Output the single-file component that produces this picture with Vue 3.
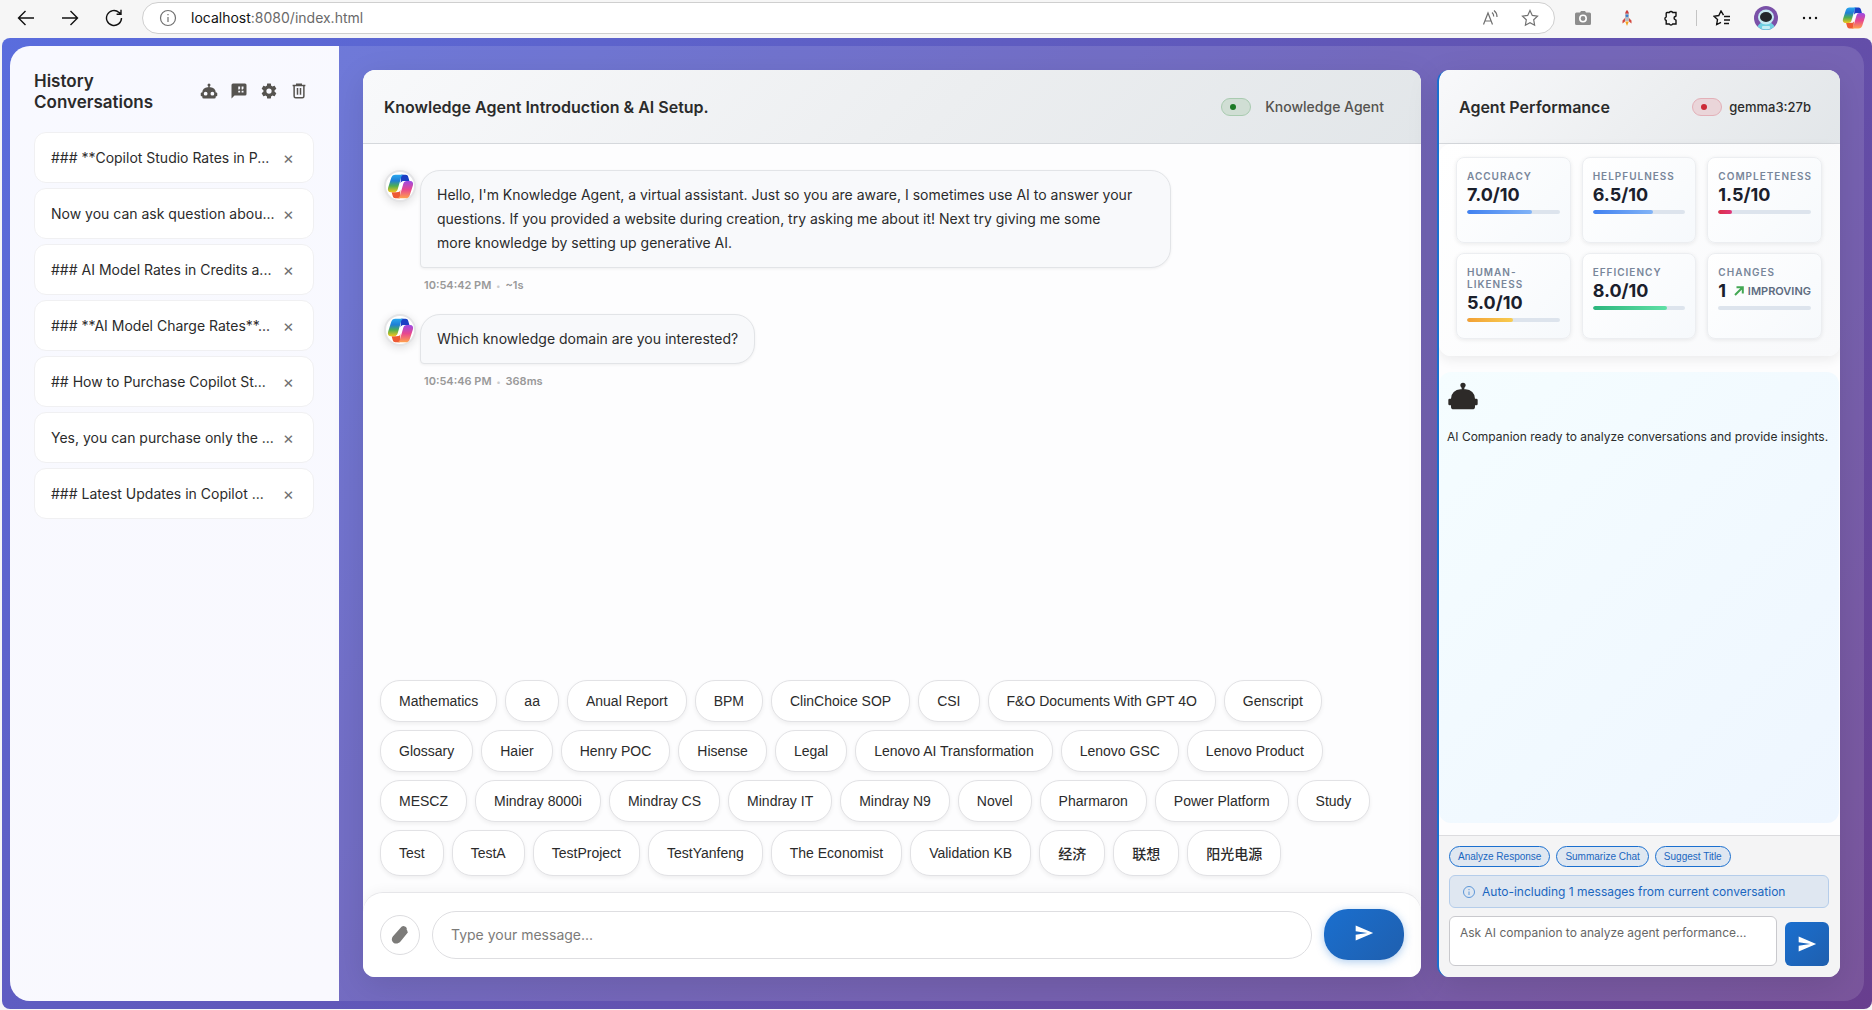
<script setup>
import { ref } from 'vue'

const message = ref('')
const question = ref('')

const robotBody =
  'M12 2a2 2 0 0 1 2 2c0 .74-.4 1.39-1 1.73V7h1a7 7 0 0 1 7 7h1a1 1 0 0 1 1 1v3a1 1 0 0 1-1 1h-1v1a2 2 0 0 1-2 2H5a2 2 0 0 1-2-2v-1H2a1 1 0 0 1-1-1v-3a1 1 0 0 1 1-1h1a7 7 0 0 1 7-7h1V5.73c-.6-.34-1-.99-1-1.73a2 2 0 0 1 2-2z'
const robotEyes =
  'M7.5 13a2.5 2.5 0 0 0-2.5 2.5A2.5 2.5 0 0 0 7.5 18a2.5 2.5 0 0 0 2.5-2.5A2.5 2.5 0 0 0 7.5 13m9 0a2.5 2.5 0 0 0-2.5 2.5 2.5 2.5 0 0 0 2.5 2.5 2.5 2.5 0 0 0 2.5-2.5 2.5 2.5 0 0 0-2.5-2.5z'
const gear =
  'M12 15.5A3.5 3.5 0 0 1 8.5 12 3.5 3.5 0 0 1 12 8.500a3.5 3.5 0 0 1 3.5 3.5 3.5 3.5 0 0 1-3.500 3.500m7.430-2.530c.04-.32.07-.64.07-.97s-.03-.66-.07-1l2.110-1.630c.19-.15.24-.42.12-.64l-2-3.460c-.12-.22-.39-.31-.61-.22l-2.490 1c-.52-.39-1.060-.73-1.690-.98l-.37-2.650A.506.506 0 0 0 14 2h-4c-.25 0-.46.18-.5.42l-.37 2.650c-.63.25-1.170.59-1.690.98l-2.490-1c-.22-.09-.49 0-.61.22l-2 3.460c-.13.22-.07.49.12.64L4.570 11c-.04.34-.07.67-.07 1s.03.65.07.97l-2.110 1.660c-.19.15-.25.42-.12.64l2 3.460c.12.22.39.3.61.22l2.490-1.010c.52.4 1.060.74 1.690.99l.37 2.650c.04.24.25.42.5.42h4c.25 0 .46-.18.5-.42l.37-2.650c.63-.26 1.170-.59 1.690-.99l2.490 1.010c.22.08.49 0 .61-.22l2-3.460c.12-.22.07-.49-.12-.64z'

const conversations = [
  '### **Copilot Studio Rates in P...',
  'Now you can ask question abou...',
  '### AI Model Rates in Credits a...',
  '### **AI Model Charge Rates**...',
  '## How to Purchase Copilot St...',
  'Yes, you can purchase only the ...',
  '### Latest Updates in Copilot ...'
]

const messages = [
  {
    text: "Hello, I'm Knowledge Agent, a virtual assistant. Just so you are aware, I sometimes use AI to answer your questions. If you provided a website during creation, try asking me about it! Next try giving me some more\u00a0knowledge by setting up generative AI.",
    time: '10:54:42 PM',
    took: '~1s'
  },
  { text: 'Which knowledge domain are you interested?', time: '10:54:46 PM', took: '368ms' }
]

const domains = [
  'Mathematics', 'aa', 'Anual Report', 'BPM', 'ClinChoice SOP', 'CSI', 'F&O Documents With GPT 4O', 'Genscript',
  'Glossary', 'Haier', 'Henry POC', 'Hisense', 'Legal', 'Lenovo AI Transformation', 'Lenovo GSC', 'Lenovo Product',
  'MESCZ', 'Mindray 8000i', 'Mindray CS', 'Mindray IT', 'Mindray N9', 'Novel', 'Pharmaron', 'Power Platform', 'Study',
  'Test', 'TestA', 'TestProject', 'TestYanfeng', 'The Economist', 'Validation KB', '经济', '联想', '阳光电源'
]

const metrics = [
  { label: 'Accuracy', value: '7.0/10', fill: 70, tone: 'blue' },
  { label: 'Helpfulness', value: '6.5/10', fill: 65, tone: 'blue' },
  { label: 'Completeness', value: '1.5/10', fill: 15, tone: 'red' },
  { label: 'Human-Likeness', value: '5.0/10', fill: 50, tone: 'amber' },
  { label: 'Efficiency', value: '8.0/10', fill: 80, tone: 'green' },
  { label: 'Changes', value: '1', fill: 0, tone: 'blue', trend: 'Improving' }
]

const quickActions = ['Analyze Response', 'Summarize Chat', 'Suggest Title']
</script>

<template>
  <div class="browser">
    <svg class="defs" width="0" height="0" aria-hidden="true">
      <defs>
        <linearGradient id="cpA" x1="0" y1="0" x2="0" y2="1">
          <stop offset="0" stop-color="#2aa7ee" /><stop offset=".35" stop-color="#1f7fd6" />
          <stop offset=".65" stop-color="#4fae52" /><stop offset="1" stop-color="#f4c51c" />
        </linearGradient>
        <linearGradient id="cpB" x1="0" y1="0" x2="0" y2="1">
          <stop offset="0" stop-color="#9a4be6" /><stop offset=".5" stop-color="#e8488e" />
          <stop offset="1" stop-color="#ffa24d" />
        </linearGradient>
        <symbol id="copilot" viewBox="0 0 24 24">
          <path d="M12.500 1.500h4c1.300 0 2 .8 2.400 2l1 3.500h-4.400c-2 0-3 .8-3.400 2.200z" fill="#1b3fc4" />
          <path d="M11.500 22.500h-4c-1.300 0-2-.8-2.400-2l-1-3.500h4.400c2 0 3-.8 3.400-2.200z" fill="#ee5a34" />
          <path d="M7.500 1.500h7.500c-1.300 0-2 .9-2.400 2.200L9.500 14.500c-.5 1.700-1.400 2.500-3 2.500h-3C1.300 17 .3 15.300 1 13L3.700 4.500c.6-2 1.800-3 3.800-3z" fill="url(#cpA)" />
          <path d="M16.500 22.500H9c1.300 0 2-.9 2.400-2.200L14.500 9.500c.5-1.700 1.400-2.500 3-2.500h3c2.200 0 3.200 1.700 2.500 4l-2.700 8.500c-.6 2-1.800 3-3.800 3z" fill="url(#cpB)" />
          <path d="M15.500 7.200c-2 .1-3 .8-3.500 2.300l-1.800 6c-.2.700-.5 1.100-.9 1.400 1.500-.2 2.300-.8 2.700-2.100l2.300-6c.3-.8.600-1.200 1.200-1.600z" fill="#fff" />
        </symbol>
        <symbol id="send" viewBox="0 0 24 24">
          <path d="M2 3v7l14 2-14 2v7l21-9z" fill="currentColor" />
        </symbol>
      </defs>
    </svg>

    <header class="toolbar">
      <nav class="nav" aria-label="Browser">
        <button aria-label="Back">
          <svg width="18" height="18" viewBox="0 0 18 18" class="line"><path d="M17 9H1.500M8.500 2l-7 7 7 7" /></svg>
        </button>
        <button aria-label="Forward">
          <svg width="18" height="18" viewBox="0 0 18 18" class="line"><path d="M1 9h15.500M9.500 2l7 7-7 7" /></svg>
        </button>
        <button aria-label="Reload">
          <svg width="18" height="18" viewBox="0 0 18 18" class="line"><path d="M16.500 9A7.500 7.500 0 1 1 14 3.400L16 5M16 .8V5.200h-4.400" /></svg>
        </button>
      </nav>
      <div class="address">
        <svg width="18" height="18" viewBox="0 0 18 18" class="line grey"><circle cx="9" cy="9" r="7.500" /><path d="M9 8v5M9 5v1.300" /></svg>
        <span class="url">localhost<span>:8080/index.html</span></span>
        <div class="address-tools">
          <svg class="grey line" width="18" height="18" viewBox="0 0 18 18"><path d="M2.500 15.500L7 4l4.500 11.500M4 12h6M11 3.500a5 5 0 0 1 1.700 4M13 1.500a8 8 0 0 1 3 6.500" /></svg>
          <svg class="grey line" width="18" height="18" viewBox="0 0 18 18"><path d="M9 1.500l2.300 4.900 5.200.7-3.800 3.700.9 5.400L9 13.700l-4.600 2.500.9-5.400L1.500 7.100l5.200-.7z" /></svg>
        </div>
      </div>
      <div class="extensions">
        <button aria-label="Camera">
          <svg width="16" height="14" viewBox="0 0 16 14"><path d="M5 1.500L6 0h4l1 1.500h3.500A1.500 1.500 0 0 1 16 3v9.500a1.500 1.500 0 0 1-1.500 1.500h-13A1.500 1.500 0 0 1 0 12.500V3a1.500 1.500 0 0 1 1.500-1.500z" fill="#8d8d8d" /><circle cx="8" cy="7.500" r="3.200" fill="none" stroke="#fff" stroke-width="1.600" /></svg>
        </button>
        <button aria-label="Rocket">
          <svg width="10" height="16" viewBox="0 0 10 16"><path d="M5 0c1.500 1.500 2 3 2 5v6H3V5c0-2 .5-3.500 2-5z" fill="#b9bcc4" /><path d="M5 0c.9.900 1.500 2 1.800 3.500H3.200C3.500 2 4.100.9 5 0z" fill="#cf3b3b" /><circle cx="5" cy="5.800" r="1.400" fill="#3a7fd0" /><path d="M3 8L.5 10.500V13.500L3 11.500zM7 8l2.500 2.500V13.500L7 11.500z" fill="#d4493f" /><path d="M3.200 11.500h3.600L5 16z" fill="#f3a21f" /></svg>
        </button>
        <button aria-label="Extensions">
          <svg width="16" height="16" viewBox="0 0 16 16" class="line"><path d="M4 2.500h2.300a1.900 1.900 0 0 1 3.400 0H13V6a.6.6 0 0 1-.8.5 1.700 1.700 0 0 0 0 3.200.6.6 0 0 1 .8.500V14H9.700a1.900 1.900 0 0 1-3.400 0H3.200v-3.500a1.900 1.900 0 0 1 0-3.600V3.300a.8.8 0 0 1 .8-.8z" /></svg>
        </button>
        <span class="divider"></span>
        <button aria-label="Favorites">
          <svg width="18" height="16" viewBox="0 0 18 16" class="line"><path d="M10.500 5.200L8 1 5.800 5.500 1 6.200l3.500 3.400-.8 4.900L8 12.300M11 6.500h6M11 10h6M11 13.500h5" /></svg>
        </button>
        <button aria-label="Profile">
          <svg width="24" height="24" viewBox="0 0 24 24"><clipPath id="pc"><circle cx="12" cy="12" r="12" /></clipPath><g clip-path="url(#pc)"><path d="M0 0h24v24H0z" fill="#7a51a8" /><path d="M3 24c0-5 3-8 9-8s9 3 9 8z" fill="#6fd0e2" /><rect x="8" y="20" width="8" height="3" rx="1" fill="#c5eef5" /><ellipse cx="12" cy="11" rx="8" ry="7.500" fill="#c5e9f2" /><ellipse cx="12" cy="11" rx="6" ry="5" fill="#23262b" /></g></svg>
        </button>
        <button aria-label="More">
          <svg width="16" height="4" viewBox="0 0 16 4" fill="#111"><circle cx="2" cy="2" r="1.200" /><circle cx="8" cy="2" r="1.200" /><circle cx="14" cy="2" r="1.200" /></svg>
        </button>
        <button aria-label="Copilot"><svg width="24" height="24"><use href="#copilot" /></svg></button>
      </div>
    </header>

    <div class="page">
      <div class="app">
        <aside class="sidebar">
          <div class="side-head">
            <h2>History Conversations</h2>
            <div class="side-tools">
              <button aria-label="AI companion"><svg width="18" height="18" viewBox="0 0 24 24"><path :d="robotBody + robotEyes" fill="currentColor" fill-rule="evenodd" /></svg></button>
              <button aria-label="Quotes"><svg width="18" height="18" viewBox="0 0 24 24"><path d="M4 2h16a2 2 0 0 1 2 2v12a2 2 0 0 1-2 2H6l-4 4V4a2 2 0 0 1 2-2z" fill="currentColor" /><path d="M11 6h2.500v2.500L12.500 10H11zM15.500 6H18v2.500L17 10h-1.500zM11 11.500h2.500V14H11zM15.500 11.500H18V14h-2.500z" fill="#f8f9ff" /></svg></button>
              <button aria-label="Settings"><svg width="18" height="18" viewBox="0 0 24 24"><path :d="gear" fill="currentColor" /></svg></button>
              <button aria-label="Delete all"><svg width="18" height="18" viewBox="0 0 24 24" fill="none" stroke="currentColor" stroke-width="2"><path d="M3.500 4.500h17M9 4V3h6v1M5.500 5v14a2 2 0 0 0 2 2h9a2 2 0 0 0 2-2V5M10 8v9M14 8v9" /></svg></button>
            </div>
          </div>
          <ul class="history">
            <li v-for="c in conversations" :key="c">
              <a href="#">{{ c }}</a>
              <button aria-label="Remove conversation">×</button>
            </li>
          </ul>
        </aside>

        <main class="workspace">
          <section class="panel chat">
            <header class="panel-head">
              <h1>Knowledge Agent Introduction &amp; AI Setup.</h1>
              <span class="status on"></span>
              <span class="agent">Knowledge Agent</span>
            </header>
            <div class="messages">
              <article v-for="m in messages" :key="m.time" class="message">
                <span class="avatar"><svg width="27" height="27"><use href="#copilot" /></svg></span>
                <div class="message-body">
                  <p class="bubble">{{ m.text }}</p>
                  <p class="meta">{{ m.time }}<i>•</i>{{ m.took }}</p>
                </div>
              </article>
            </div>
            <div class="domains">
              <button v-for="d in domains" :key="d">{{ d }}</button>
            </div>
            <form class="composer" @submit.prevent>
              <button type="button" class="attach" aria-label="Attach file">
                <svg width="20" height="20" viewBox="0 0 20 20"><path d="M11.500 1.800a3.400 3.400 0 0 1 5 .9c.4.800.3 1.400.1 2 .7.300.8.800.5 1.400.8.500.9 1.300.3 2L10.500 16.500c-2.200 2.400-5 2.700-7 1.200s-2.300-4.300-.5-6.500z" fill="currentColor" /></svg>
              </button>
              <input v-model="message" type="text" placeholder="Type your message..." aria-label="Type your message" />
              <button type="submit" class="send" aria-label="Send"><svg width="20" height="20"><use href="#send" /></svg></button>
            </form>
          </section>

          <section class="panel performance">
            <header class="panel-head">
              <h2>Agent Performance</h2>
              <span class="status off"></span>
              <span class="model">gemma3:27b</span>
            </header>
            <div class="metrics">
              <div v-for="m in metrics" :key="m.label" class="metric">
                <div class="label">{{ m.label }}</div>
                <div class="value">
                  {{ m.value }}
                  <span v-if="m.trend" class="trend">
                    <svg width="10" height="10" viewBox="0 0 10 10" fill="none" stroke="#43a854" stroke-width="2"><path d="M1 9l7.500-7.500M2.500 1.200h6.300v6.300" /></svg>
                    {{ m.trend }}
                  </span>
                </div>
                <div class="track"><div :class="['fill', m.tone]" :style="{ width: m.fill + '%' }"></div></div>
              </div>
            </div>
            <div class="companion">
              <svg width="32" height="32" viewBox="0 0 24 24"><path :d="robotBody" fill="#2d2a28" /></svg>
              <p>AI Companion ready to analyze conversations and provide insights.</p>
            </div>
            <form class="ask" @submit.prevent>
              <div class="quick">
                <button v-for="q in quickActions" :key="q" type="button">{{ q }}</button>
              </div>
              <div class="notice">
                <svg width="12" height="12" viewBox="0 0 12 12" fill="none" stroke="#5d97d8"><circle cx="6" cy="6" r="5.500" /><path d="M6 5.500v3.500M6 3v1.200" /></svg>
                Auto-including 1 messages from current conversation
              </div>
              <div class="ask-row">
                <textarea v-model="question" placeholder="Ask AI companion to analyze agent performance..." aria-label="Ask AI companion"></textarea>
                <button type="submit" aria-label="Ask"><svg width="20" height="20"><use href="#send" /></svg></button>
              </div>
            </form>
          </section>
        </main>
      </div>
    </div>
  </div>
</template>

<style>
body {
  margin: 0;
  background: #f6f6f6;
}
</style>

<style scoped>
* {
  box-sizing: border-box;
}
.browser {
  min-height: 100vh;
  display: flex;
  flex-direction: column;
  font-family: Inter, "Noto Sans CJK SC", sans-serif;
  color: #2b2b2b;
  padding-left: 2px;
  padding-bottom: 1px;
}
.defs {
  position: absolute;
}
button {
  font-family: inherit;
  padding: 0;
  border: 0;
  background: none;
  color: inherit;
  display: flex;
  align-items: center;
  justify-content: center;
}
h1, h2, p, ul {
  margin: 0;
  padding: 0;
}
.line {
  fill: none;
  stroke: #111;
  stroke-width: 1.400;
}
.line.grey {
  stroke: #707070;
  stroke-width: 1.200;
}

/* Browser toolbar */
.toolbar {
  display: flex;
  align-items: center;
  height: 38px;
  padding-bottom: 3px;
}
.nav {
  display: flex;
  gap: 26px;
  padding: 0 19px 0 15px;
}
.address {
  flex: 1;
  display: flex;
  align-items: center;
  gap: 14px;
  height: 32px;
  padding: 0 15px 0 16px;
  border: 1px solid #cfcfcf;
  border-radius: 16px;
  background: #fff;
}
.address-tools {
  display: flex;
  gap: 22px;
}
.url {
  flex: 1;
  font-size: 14px;
  color: #111;
}
.url span {
  color: #6a6a6a;
}
.extensions {
  display: flex;
  align-items: center;
  gap: 20px;
  padding: 0 6px 0 16px;
}
.extensions button {
  width: 24px;
}
.divider {
  width: 1px;
  height: 16px;
  margin: 0 -7px;
  background: #c4c4c4;
}

/* Page */
.page {
  flex: 1;
  display: flex;
  padding: 8px;
  border-radius: 8px;
  background: linear-gradient(135deg, #5a6ddd 0%, #683e8e 100%);
}
.app {
  flex: 1;
  display: flex;
  border-radius: 20px;
  overflow: hidden;
  background: rgba(255, 255, 255, 0.12);
}
.sidebar {
  flex: 0 0 329px;
  padding: 25px 25px 24px 24px;
  background: linear-gradient(135deg, #f8f9ff, #f9f9fe);
}
.side-head {
  display: flex;
  align-items: center;
  justify-content: space-between;
  margin-bottom: 19px;
}
.side-head h2 {
  width: 124px;
  font-size: 17px;
  line-height: 21px;
  font-weight: 600;
}
.side-tools {
  display: flex;
  gap: 12px;
  padding: 0 6px 2px 0;
  color: #55534f;
}
.history {
  list-style: none;
  display: flex;
  flex-direction: column;
  gap: 5px;
}
.history li {
  display: flex;
  align-items: center;
  justify-content: space-between;
  height: 51px;
  padding: 0 19px 0 16px;
  border: 1px solid #f0f0f2;
  border-radius: 12px;
  background: #fff;
}
.history a {
  color: #2b2b2b;
  text-decoration: none;
  font-size: 14px;
  white-space: nowrap;
}
.history button {
  font-size: 17px;
  color: #707070;
}
.workspace {
  flex: 1;
  min-width: 0;
  display: flex;
  gap: 16px;
  padding: 24px;
}
.panel {
  display: flex;
  flex-direction: column;
  border-radius: 12px;
  overflow: hidden;
  background: #fdfdfe;
  box-shadow: 0 8px 32px rgba(0, 0, 0, 0.1);
}
.chat {
  flex: 1;
  min-width: 0;
}
.performance {
  flex: 0 0 403px;
  border-left: 2px solid #1a6fcf;
}
.panel-head {
  display: flex;
  align-items: center;
  height: 74px;
  border-bottom: 1px solid #d5d8dc;
  background: linear-gradient(135deg, #f8f9fb 0%, #eceef0 55%, #e2e6e9 100%);
}
.chat .panel-head {
  padding: 0 37px 0 21px;
}
.performance .panel-head {
  padding: 0 29px 0 20px;
}
.panel-head h1,
.panel-head h2 {
  flex: 1;
  font-size: 16px;
  font-weight: 600;
}
.status {
  display: flex;
  align-items: center;
  width: 30px;
  height: 18px;
  padding-left: 8px;
  border: 1px solid;
  border-radius: 9px;
}
.status::before {
  content: "";
  width: 6px;
  height: 6px;
  border-radius: 50%;
}
.status.on {
  background: #d0ded4;
  border-color: #a9cbb0;
}
.status.on::before {
  background: #1b7a25;
}
.status.off {
  background: #ead5d9;
  border-color: #e3b0b8;
}
.status.off::before {
  background: #cc2a36;
}
.agent {
  margin-left: 14px;
  font-size: 14px;
  font-weight: 500;
  color: #55534f;
}
.model {
  margin-left: 7px;
  font-size: 13px;
  font-weight: 500;
}

/* Chat */
.messages {
  flex: 1;
  padding: 26px 21px;
}
.message {
  display: flex;
  gap: 4px;
  margin-bottom: 23px;
}
.avatar {
  flex: 0 0 32px;
  height: 32px;
  display: flex;
  align-items: center;
  justify-content: center;
  border: 2px solid #e4e4e6;
  border-radius: 50%;
  background: #fff;
  box-shadow: 0 2px 8px rgba(0, 0, 0, 0.12);
}
.message-body {
  max-width: 751px;
}
.bubble {
  width: fit-content;
  padding: 12px 16px;
  border: 1px solid #e2e4e7;
  border-radius: 20px 20px 20px 4px;
  background: #f8f9fb;
  box-shadow: 0 1px 3px rgba(0, 0, 0, 0.06);
  font-size: 14px;
  line-height: 24px;
}
.meta {
  height: 23px;
  padding: 9px 4px 0;
  font-size: 11px;
  line-height: 16px;
  font-weight: 600;
  color: #999;
}
.meta i {
  margin: 0 5px;
  font-size: 8px;
  line-height: 8px;
  font-style: normal;
  vertical-align: middle;
  color: #ccc;
}
.domains {
  display: flex;
  flex-wrap: wrap;
  gap: 8px;
  padding: 0 17px 16px;
}
.domains button {
  min-height: 42px;
  padding: 12px 18px;
  border: 1px solid #e2e2e5;
  border-radius: 20px;
  background: #fff;
  box-shadow: 0 2px 4px rgba(0, 0, 0, 0.06);
  font-family: "Liberation Sans", "Noto Sans CJK SC", sans-serif;
  font-size: 14px;
  font-weight: 500;
}
.composer {
  display: flex;
  align-items: center;
  gap: 12px;
  padding: 16px 17px 17px;
  border-top: 1px solid #e6e6e9;
  border-radius: 20px 20px 0 0;
  background: #fff;
  box-shadow: 0 -2px 12px rgba(0, 0, 0, 0.04);
}
.attach {
  width: 40px;
  height: 40px;
  border: 1px solid #dddde0;
  border-radius: 50%;
  color: #7c7b79;
}
.composer input {
  flex: 1;
  min-width: 0;
  height: 48px;
  padding: 0 18px;
  border: 1px solid #dedee1;
  border-radius: 24px;
  background: #fff;
  font-family: inherit;
  font-size: 14px;
}
.composer input::placeholder {
  color: #7c7b79;
}
.send {
  width: 80px;
  height: 51px;
  padding-bottom: 3px;
  border-radius: 24px;
  color: #fff;
  background: linear-gradient(135deg, #1a6fcf, #1f5fae);
  box-shadow: 0 2px 8px rgba(26, 111, 207, 0.35);
}

/* Agent performance */
.metrics {
  display: grid;
  grid-template-columns: repeat(3, 1fr);
  gap: 10px 11px;
  padding: 13px 18px 17px 17px;
  border-radius: 12px;
  background: linear-gradient(135deg, #fff, #f8f9fb);
  box-shadow: 0 4px 12px rgba(0, 0, 0, 0.07);
}
.metric {
  min-width: 0;
  height: 86px;
  padding: 12px 10px;
  border: 1px solid #eceef1;
  border-radius: 8px;
  background: linear-gradient(135deg, #fff, #f6f9fc);
  box-shadow: 0 1px 4px rgba(0, 0, 0, 0.08);
}
.label {
  font-size: 10px;
  line-height: 12px;
  font-weight: 600;
  letter-spacing: 1px;
  text-transform: uppercase;
  color: #78869a;
}
.value {
  display: flex;
  align-items: center;
  justify-content: space-between;
  font-size: 18px;
  line-height: 26px;
  font-weight: 700;
  color: #1a202c;
}
.trend {
  display: flex;
  align-items: center;
  gap: 4px;
  font-size: 11px;
  font-weight: 600;
  text-transform: uppercase;
  color: #5d6b80;
}
.track {
  height: 4px;
  margin-top: 2px;
  border-radius: 2px;
  background: #dde4ed;
  overflow: hidden;
}
.fill {
  height: 4px;
  border-radius: 2px;
}
.blue {
  background: linear-gradient(90deg, #4080f0, #82b4f7);
}
.red {
  background: linear-gradient(90deg, #dc2f45, #e0367c);
}
.amber {
  background: linear-gradient(90deg, #f2a035, #f8cc50);
}
.green {
  background: linear-gradient(90deg, #2cb67d, #5fe0a6);
}
.companion {
  flex: 1;
  margin: 16px 1px 12px 0;
  padding: 8px;
  border-radius: 12px;
  background: linear-gradient(135deg, #f5fdff, #eef6ff);
}
.companion svg {
  display: block;
}
.companion p {
  margin-top: 15px;
  font-size: 12px;
  line-height: 20px;
  white-space: nowrap;
}
.ask {
  padding: 10px 11px 11px 10px;
  border-top: 1px solid #dcdcdf;
  background: #f4f4f5;
}
.quick {
  display: flex;
  gap: 6px;
}
.quick button {
  height: 21px;
  padding: 0 8px;
  border: 1px solid #1a6fcf;
  border-radius: 11px;
  background: #dfe7f1;
  color: #1a66c0;
  font-family: "Liberation Sans", sans-serif;
  font-size: 10px;
}
.notice {
  display: flex;
  align-items: center;
  gap: 7px;
  height: 33px;
  margin: 8px 0;
  padding: 0 13px;
  border: 1px solid #b5cdea;
  border-radius: 6px;
  background: #dfe7f1;
  color: #1a66c0;
  font-size: 12px;
}
.ask-row {
  display: flex;
  align-items: flex-end;
  gap: 8px;
}
.ask-row textarea {
  flex: 1;
  min-width: 0;
  height: 50px;
  padding: 7px 10px;
  border: 1px solid #c9c9cd;
  border-radius: 6px;
  background: #fff;
  resize: none;
  font-family: inherit;
  font-size: 12px;
  line-height: 17px;
}
.ask-row textarea::placeholder {
  color: #666;
}
.ask-row button {
  width: 44px;
  height: 44px;
  border-radius: 6px;
  color: #fff;
  background: linear-gradient(135deg, #1a6fcf, #1f5fae);
}
</style>
